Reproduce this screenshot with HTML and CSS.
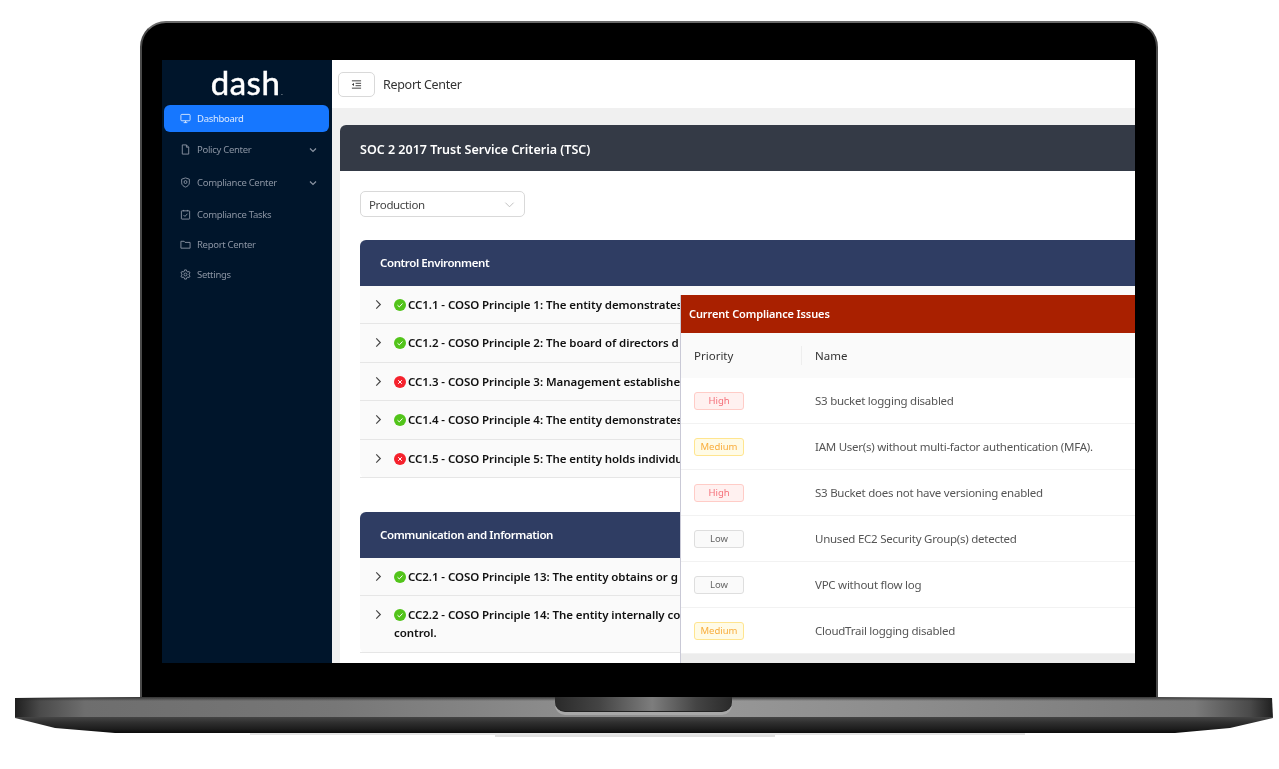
FILE: index.html
```html
<!DOCTYPE html>
<html lang="en">
<head>
  <meta charset="UTF-8" />
  <title>Dash - Report Center</title>
  <link rel="stylesheet" href="styles.css">
</head>
<body>

  <div class="lid">
    <div class="screen">

      <!-- Sidebar -->
      <aside class="sidebar">
        <div class="logo">dash<span class="logo-dot">.</span></div>
        <nav class="menu">
          <a class="menu-item active">
            <svg class="menu-icon" viewBox="0 0 12 12"><rect x="1" y="1.500" width="10" height="7" rx="1"/><path d="M4 10.500h4M6 8.500v2"/></svg>
            Dashboard
          </a>
          <a class="menu-item sub">
            <svg class="menu-icon" viewBox="0 0 12 12"><path d="M2.500 1h4.500l2.500 2.500V11h-7zM7 1v2.500h2.500"/></svg>
            Policy Center
            <svg class="menu-caret" viewBox="0 0 10 10"><path d="M2 3.500l3 3 3-3"/></svg>
          </a>
          <a class="menu-item sub">
            <svg class="menu-icon" viewBox="0 0 12 12"><path d="M6 1l4.200 1.400v4C10.200 8.800 8 10.300 6 11 4 10.300 1.800 8.800 1.800 6.400v-4z"/><circle cx="6" cy="5.500" r="1.600"/></svg>
            Compliance Center
            <svg class="menu-caret" viewBox="0 0 10 10"><path d="M2 3.500l3 3 3-3"/></svg>
          </a>
          <a class="menu-item">
            <svg class="menu-icon" viewBox="0 0 12 12"><rect x="1.500" y="2" width="9" height="9" rx=".5"/><path d="M3.800 6.500l1.600 1.600 2.800-3M4 1v1.500M8 1v1.500"/></svg>
            Compliance Tasks
          </a>
          <a class="menu-item">
            <svg class="menu-icon" viewBox="0 0 12 12"><path d="M1 2.500h3.500l1 1.200H11V10H1z"/></svg>
            Report Center
          </a>
          <a class="menu-item">
            <svg class="menu-icon" viewBox="0 0 12 12"><path d="M5 1h2l.3 1.500 1.300.7 1.400-.5 1 1.700-1.100 1 0 1.200 1.100 1-1 1.700-1.400-.5-1.300.7L7 11H5l-.3-1.500-1.300-.7-1.400.5-1-1.700 1.100-1 0-1.200-1.100-1 1-1.700 1.400.5 1.300-.7z"/><circle cx="6" cy="6" r="1.600"/></svg>
            Settings
          </a>
        </nav>
      </aside>

      <!-- Main area -->
      <main class="main">
        <header class="topbar">
          <button class="toggle">
            <svg viewBox="0 0 12 12"><path d="M1 2h10M5 4.700h6M5 7.300h6M1 10h10"/><path class="fill" d="M3.300 4.300v3.400L1 6z"/></svg>
          </button>
          <span class="page-title">Report Center</span>
        </header>

        <div class="content">
          <div class="card">
            <div class="card-head">SOC 2 2017 Trust Service Criteria (TSC)</div>
            <div class="card-body">
              <div class="select">
                Production
                <svg viewBox="0 0 12 12"><path d="M1.500 4l4.500 4.500L10.500 4"/></svg>
              </div>

              <section class="group">
                <div class="group-head">Control Environment</div>
                <div class="row">
                  <svg class="chev" viewBox="0 0 10 12"><path d="M2.500 1.500l4.500 4.500-4.500 4.500"/></svg>
                  <p><svg class="status" viewBox="0 0 12 12"><circle class="ok" cx="6" cy="6" r="6"/><path d="M3.500 6.200l1.800 1.700 3.200-3.400"/></svg> CC1.1 - COSO Principle 1: The entity demonstrates</p>
                </div>
                <div class="row">
                  <svg class="chev" viewBox="0 0 10 12"><path d="M2.500 1.500l4.500 4.500-4.500 4.500"/></svg>
                  <p><svg class="status" viewBox="0 0 12 12"><circle class="ok" cx="6" cy="6" r="6"/><path d="M3.500 6.200l1.800 1.700 3.200-3.400"/></svg> CC1.2 - COSO Principle 2: The board of directors d</p>
                </div>
                <div class="row">
                  <svg class="chev" viewBox="0 0 10 12"><path d="M2.500 1.500l4.500 4.500-4.500 4.500"/></svg>
                  <p><svg class="status" viewBox="0 0 12 12"><circle class="bad" cx="6" cy="6" r="6"/><path d="M4.200 4.200l3.600 3.600M7.800 4.200l-3.600 3.600"/></svg> CC1.3 - COSO Principle 3: Management establishes</p>
                </div>
                <div class="row">
                  <svg class="chev" viewBox="0 0 10 12"><path d="M2.500 1.500l4.500 4.500-4.500 4.500"/></svg>
                  <p><svg class="status" viewBox="0 0 12 12"><circle class="ok" cx="6" cy="6" r="6"/><path d="M3.500 6.200l1.800 1.700 3.200-3.400"/></svg> CC1.4 - COSO Principle 4: The entity demonstrates</p>
                </div>
                <div class="row">
                  <svg class="chev" viewBox="0 0 10 12"><path d="M2.500 1.500l4.500 4.500-4.500 4.500"/></svg>
                  <p><svg class="status" viewBox="0 0 12 12"><circle class="bad" cx="6" cy="6" r="6"/><path d="M4.200 4.200l3.600 3.600M7.800 4.200l-3.600 3.600"/></svg> CC1.5 - COSO Principle 5: The entity holds individu</p>
                </div>
              </section>

              <section class="group">
                <div class="group-head">Communication and Information</div>
                <div class="row">
                  <svg class="chev" viewBox="0 0 10 12"><path d="M2.500 1.500l4.500 4.500-4.500 4.500"/></svg>
                  <p><svg class="status" viewBox="0 0 12 12"><circle class="ok" cx="6" cy="6" r="6"/><path d="M3.500 6.200l1.800 1.700 3.200-3.400"/></svg> CC2.1 - COSO Principle 13: The entity obtains or g</p>
                </div>
                <div class="row">
                  <svg class="chev" viewBox="0 0 10 12"><path d="M2.500 1.500l4.500 4.500-4.500 4.500"/></svg>
                  <p><svg class="status" viewBox="0 0 12 12"><circle class="ok" cx="6" cy="6" r="6"/><path d="M3.500 6.200l1.800 1.700 3.200-3.400"/></svg> CC2.2 - COSO Principle 14: The entity internally co<br>control.</p>
                </div>
              </section>
            </div>
          </div>
        </div>
      </main>

      <!-- Issues panel sits over the report -->
      <div class="issues">
        <div class="issues-head">Current Compliance Issues</div>
        <div class="issues-cols">
          <div class="col-priority">Priority</div>
          <div class="col-name">Name</div>
        </div>
        <div class="issue"><div class="col-priority"><span class="tag high">High</span></div><div class="col-name">S3 bucket logging disabled</div></div>
        <div class="issue"><div class="col-priority"><span class="tag medium">Medium</span></div><div class="col-name">IAM User(s) without multi-factor authentication (MFA).</div></div>
        <div class="issue"><div class="col-priority"><span class="tag high">High</span></div><div class="col-name">S3 Bucket does not have versioning enabled</div></div>
        <div class="issue"><div class="col-priority"><span class="tag low">Low</span></div><div class="col-name">Unused EC2 Security Group(s) detected</div></div>
        <div class="issue"><div class="col-priority"><span class="tag low">Low</span></div><div class="col-name">VPC without flow log</div></div>
        <div class="issue"><div class="col-priority"><span class="tag medium">Medium</span></div><div class="col-name">CloudTrail logging disabled</div></div>
      </div>
    </div>
  </div>

  <div class="base">
    <div class="base-top"></div>
    <div class="base-bottom"></div>
    <div class="notch"></div>
  </div>
  <div class="shadow shadow-1"></div>
  <div class="shadow shadow-2"></div>

</body>
</html>
```

FILE: styles.css
```css
html, body {
  margin: 0;
  padding: 0;
  height: 100%;
  overflow: hidden;
}
body {
  background-color: #fff;
  font-family: "Noto Sans", "Open Sans", Arial, sans-serif;
  padding-top: 21px;
  box-sizing: border-box;
}

/* Laptop frame */
.lid {
  width: 1018px;
  height: 676px;
  margin-left: 140px;
  padding: 37px 21px 34px 20px;
  box-sizing: border-box;
  background-color: #000;
  border: 2px solid #4a4a4a;
  border-top-color: #6b6b6b;
  border-bottom: 0;
  border-radius: 26px 26px 0 0;
}
.screen {
  position: relative;
  display: flex;
  width: 973px;
  height: 603px;
  overflow: hidden;
  background-color: #fff;
  filter: blur(0.35px);
}
.base {
  position: relative;
  width: 1258px;
  height: 36px;
  margin-left: 15px;
  clip-path: polygon(0 1px, 125px 0, 1133px 0, 1257px 1px, 1258px 21px, 1215px 31px, 1160px 36px, 100px 36px, 40px 31px, 0 21px);
}
.base-top {
  height: 20px;
  background:
    linear-gradient(to bottom, rgba(30,30,30,.75) 0, rgba(30,30,30,0) 4px),
    linear-gradient(to right, #1f1f1f 0, #4a4a4a 25px, #6e6e6e 70px, #777 320px, #8c8c8c 540px, #969696 717px, #8c8c8c 900px, #7a7a7a 1180px, #4a4a4a 1235px, #1f1f1f 100%);
}
.base-bottom {
  height: 16px;
  background: linear-gradient(to bottom, #454545 0, #2f2f2f 35%, #1d1d1d 75%, #0a0a0a 100%);
}
.notch {
  position: absolute;
  left: 540px;
  top: 0;
  width: 177px;
  height: 15px;
  border-radius: 0 0 10px 10px;
  border-bottom: 1px solid #222;
  box-sizing: border-box;
  background: linear-gradient(to right, #2a2a2a 0, #444 25%, #7d7d7d 55%, #444 80%, #2a2a2a 100%);
  box-shadow: 0 3px 0 #a8a8a8;
}
.shadow-1 {
  width: 775px;
  height: 2px;
  margin-left: 250px;
  background-color: #e4e4e4;
}
.shadow-2 {
  width: 280px;
  height: 2px;
  margin-left: 495px;
  background-color: #e0e0e0;
}

/* Sidebar */
.sidebar {
  flex: 0 0 170px;
  background-color: #00152b;
}
.logo {
  height: 45px;
  text-align: center;
  color: #fff;
  font-family: "Lato", sans-serif;
  font-size: 33px;
  font-weight: 400;
  letter-spacing: 0.5px;
  line-height: 44px;
  -webkit-text-stroke: 0.5px #fff;
}
.logo-dot {
  font-size: 6px;
  margin-left: 1px;
  -webkit-text-stroke: 0;
}
.menu-item {
  display: flex;
  align-items: center;
  height: 30px;
  margin: 0 3px 0 2px;
  padding-left: 16px;
  font-size: 9.500px;
  letter-spacing: -0.3px;
  color: #8a94a3;
}
.menu-item.active {
  height: 27px;
  margin-bottom: 1px;
  border-radius: 6px;
  background-color: #1677ff;
  color: #dbe9ff;
}
.menu-item.sub {
  height: 33px;
}
.menu-icon {
  width: 11px;
  height: 11px;
  margin-right: 6px;
  fill: none;
  stroke: currentColor;
  stroke-width: 1;
}
.menu-caret {
  width: 10px;
  height: 10px;
  margin-left: auto;
  margin-right: 11px;
  fill: none;
  stroke: currentColor;
  stroke-width: 1.200;
}

/* Main */
.main {
  flex: 1;
  min-width: 0;
  overflow: hidden;
  background-color: #f0f0f0;
}
.topbar {
  display: flex;
  align-items: center;
  height: 48px;
  padding-left: 6px;
  background-color: #fff;
}
.toggle {
  display: flex;
  align-items: center;
  justify-content: center;
  width: 37px;
  height: 25px;
  margin-right: 8px;
  padding: 0;
  border: 1px solid #d9d9d9;
  border-radius: 5px;
  background-color: #fff;
}
.toggle svg {
  width: 11px;
  height: 11px;
  fill: none;
  stroke: #333;
  stroke-width: 1;
}
.toggle .fill {
  fill: #333;
  stroke: none;
}
.page-title {
  font-size: 12.500px;
  letter-spacing: -0.3px;
  color: #333;
}
.content {
  padding: 17px 0 0 8px;
}
.card {
  width: 1000px;
  border-radius: 6px 0 0 0;
  background-color: #fff;
}
.card-head {
  height: 46px;
  padding-left: 20px;
  border-radius: 6px 0 0 0;
  background-color: #343a46;
  color: #fff;
  font-size: 12.500px;
  font-weight: 600;
  line-height: 49px;
}
.card-body {
  padding: 20px;
}
.select {
  display: flex;
  align-items: center;
  justify-content: space-between;
  width: 165px;
  height: 26px;
  margin-bottom: 23px;
  padding: 0 9px 0 8px;
  box-sizing: border-box;
  border: 1px solid #d9d9d9;
  border-radius: 5px;
  font-size: 11.500px;
  letter-spacing: -0.35px;
  color: #444;
}
.select svg {
  width: 11px;
  height: 11px;
  fill: none;
  stroke: #bbb;
  stroke-width: 1;
}
.group {
  margin-bottom: 34px;
  border-bottom-left-radius: 6px;
  background-color: #fafafa;
}
.group-head {
  height: 45.500px;
  padding-left: 20px;
  border-radius: 6px 0 0 0;
  background-color: #2f3d63;
  color: #fff;
  font-size: 11.500px;
  font-weight: 600;
  letter-spacing: -0.4px;
  line-height: 46px;
}
.row {
  display: flex;
  padding: 10px 0 9.500px 14px;
  border-bottom: 1px solid #e6e6e6;
}
.chev {
  flex: 0 0 9px;
  width: 9px;
  height: 11px;
  margin-top: 3px;
  margin-right: 11px;
  fill: none;
  stroke: #444;
  stroke-width: 1.300;
}
.row p {
  margin: 0;
  font-size: 11.500px;
  font-weight: 600;
  line-height: 18px;
  letter-spacing: -0.06px;
  color: #111;
  white-space: nowrap;
}
.status {
  width: 12px;
  height: 12px;
  margin-right: -1px;
  vertical-align: -2px;
  fill: none;
  stroke: #fff;
  stroke-width: 1;
}
.status .ok {
  fill: #52c41a;
  stroke: none;
}
.status .bad {
  fill: #f5222d;
  stroke: none;
}

/* Issues panel */
.issues {
  position: absolute;
  top: 235px;
  right: 0;
  bottom: 0;
  width: 454px;
  background-color: #ececec;
  box-shadow: -1px 0 0 #c9c9d6;
}
.issues-head {
  height: 38px;
  padding-left: 8px;
  background-color: #a92000;
  color: #fff;
  font-size: 11px;
  font-weight: 600;
  letter-spacing: -0.12px;
  line-height: 38px;
}
.issues-cols, .issue {
  display: flex;
  align-items: center;
  font-size: 11.500px;
}
.issues-cols {
  position: relative;
  height: 45px;
  background-color: #fafafa;
  color: #333;
}
.issues-cols .col-priority, .issues-cols .col-name {
  margin-top: -1px;
}
.issues-cols::after {
  content: "";
  position: absolute;
  left: 120px;
  top: 13px;
  width: 1px;
  height: 19px;
  background-color: #eee;
}
.issue {
  height: 45px;
  border-bottom: 1px solid #f2f2f2;
  background-color: #fff;
  color: #555;
}
.issue .col-name {
  letter-spacing: -0.25px;
}
.col-priority {
  flex: 0 0 134px;
  padding-left: 13px;
  box-sizing: border-box;
}
.tag {
  display: block;
  width: 50px;
  height: 18px;
  margin-top: 1px;
  box-sizing: border-box;
  border: 1px solid;
  border-radius: 3px;
  font-size: 9.500px;
  line-height: 16px;
  text-align: center;
}
.tag.high {
  background-color: #fff1f0;
  border-color: #ffccc7;
  color: #f5707a;
}
.tag.medium {
  background-color: #fffbe6;
  border-color: #ffe58f;
  color: #f9ad3c;
}
.tag.low {
  background-color: #fafafa;
  border-color: #dedede;
  color: #666;
}
```
